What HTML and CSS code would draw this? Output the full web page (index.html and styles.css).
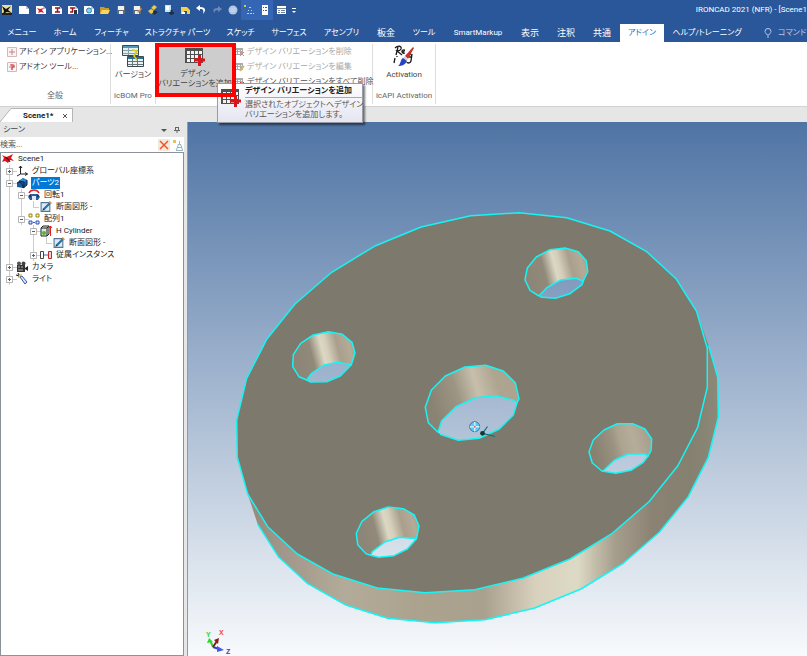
FILE: index.html
```html
<!DOCTYPE html>
<html lang="ja">
<head>
<meta charset="utf-8">
<title>IRONCAD 2021</title>
<link rel="stylesheet" href="styles.css">
</head>
<body>
<svg class="defs" aria-hidden="true">
  <symbol id="grid-plus" viewBox="0 0 20 18">
    <path d="M0 0h18v15H0z" fill="#505050"/>
    <path d="M2 3h3v3H2zM6 3h3v3H6zM10 3h3v3h-3zM14 3h3v3h-3zM2 7h3v3H2zM6 7h3v3H6zM10 7h3v3h-3zM14 7h3v3h-3zM2 11h3v3H2zM6 11h3v3H6zM10 11h3v3h-3z" fill="#f2f2f2"/>
    <path d="M9 12h11M14.500 7v11" stroke="#d9151b" stroke-width="3"/>
  </symbol>
  <symbol id="grid-mini" viewBox="0 0 10 10">
    <path d="M0 1h8v7H0z" fill="#aaa"/>
    <path d="M1 3h1v1H1zM3 3h2v1H3zM6 3h1v1H6zM1 5h1v2H1zM3 5h2v2H3z" fill="#fff"/>
  </symbol>
  <symbol id="addin" viewBox="0 0 10 10">
    <path d="M.5.5h9v9h-9z" fill="#fbf3f3" stroke="#dcb6b6"/>
    <path d="M2 5h3V2M5 8V5h3" fill="none" stroke="#b98888"/>
  </symbol>
  <symbol id="page" viewBox="0 0 10 10"><path d="M0 1h7l3 3v5H0z" fill="#fff"/><path d="M7 1v3h3z" fill="#b9c4d6"/></symbol>
  <symbol id="sketch" viewBox="0 0 11 11">
    <path d="M1 1.500h8v8H1z" fill="#d9ecf8" stroke="#5b7590"/>
    <path d="M3 8l6-6" stroke="#2f6f9f" stroke-width="2"/><path d="M8 1l2 2 1-1-2-2z" fill="#d79b3a"/><path d="M2 9l1-2 1 1z" fill="#222"/>
  </symbol>
  <symbol id="minus" viewBox="0 0 7 7"><path d="M.5.5h6v6h-6z" fill="#fff" stroke="#b5b5b5"/><path d="M2 3.500h3" stroke="#55607c"/></symbol>
  <symbol id="plus" viewBox="0 0 7 7"><path d="M.5.5h6v6h-6z" fill="#fff" stroke="#b5b5b5"/><path d="M2 3.500h3M3.500 2v3" stroke="#55607c"/></symbol>
</svg>

<header class="titlebar">
  <div class="quick">
    <button aria-label="IRONCAD"><svg viewBox="0 0 10 10"><path d="M0 0h10v10H0z" fill="#e9dfa0"/><path d="M0 1l4 3 5-3-3 4 4 3-5-1-4 2 1-3z" fill="#111"/><path d="M0 8h10v2H0z" fill="#222"/></svg></button>
    <button aria-label="新規"><svg><use href="#page"/></svg></button>
    <button aria-label="新規シーン"><svg viewBox="0 0 10 10"><use href="#page"/><path d="M1 3l3 1 4-1-2 2 2 3-3-1-3 1 1-2z" fill="#e01b22"/></svg></button>
    <button aria-label="新規図面"><svg viewBox="0 0 10 10"><use href="#page"/><path d="M3 3h5M5.500 3v4M3 7h5" stroke="#9c1020" stroke-width="1.500"/></svg></button>
    <button aria-label="図面"><svg viewBox="0 0 10 10"><use href="#page"/><path d="M2 3h5M4.500 3v4M2 7h3" stroke="#9c1020" stroke-width="1.500"/><path d="M6 5h3v4H6z" fill="#333"/></svg></button>
    <button aria-label="リンク"><svg viewBox="0 0 10 10"><use href="#page"/><circle cx="5" cy="5.500" r="2.500" fill="#8ed0ea" stroke="#2784ad"/></svg></button>
    <button aria-label="開く"><svg viewBox="0 0 10 10"><path d="M0 2h4l1 1h4v5H0z" fill="#c99a24"/><path d="M2 5h8L8 9H0z" fill="#f8d75c"/></svg></button>
    <button aria-label="保存"><svg viewBox="0 0 10 10"><path d="M1 1h8v8H1z" fill="#646a74"/><path d="M2 1h6v4H2zM3 6h4v3H3z" fill="#f1f1f1"/></svg></button>
    <button aria-label="名前を付けて保存"><svg viewBox="0 0 10 10"><path d="M1 1h8v8H1z" fill="#646a74"/><path d="M2 1h6v4H2zM3 6h4v3H3z" fill="#f1f1f1"/><path d="M5 7l4-4 1 1-4 4z" fill="#e5923b"/></svg></button>
    <button aria-label="カタログ"><svg viewBox="0 0 10 10"><path d="M3 3l3-3 3 2-3 3zM0 6l3-2 4 2-4 3z" fill="#ecc94b"/><path d="M6 5l4 2-4 3-1-3z" fill="#202a3c"/></svg></button>
    <button aria-label="部品"><svg viewBox="0 0 10 10"><path d="M1 0h6v7H1z" fill="#bcebf5"/><path d="M2 1h3v4H2z" fill="#fff"/><path d="M5 8h5M7.500 5v5" stroke="#222c44" stroke-width="2"/></svg></button>
    <button aria-label="取込"><svg viewBox="0 0 10 10"><path d="M1 2h6l3 3v4H7V6H4v3H1z" fill="#f4cf4a"/><path d="M2 7h3v2H2z" fill="#fff"/></svg></button>
    <button aria-label="元に戻す"><svg viewBox="0 0 10 10"><path d="M4 0L0 3l4 3V4c3 0 4 1 3 5 4-4 2-7-3-7z" fill="#fff"/></svg></button>
    <button aria-label="やり直し"><svg viewBox="0 0 10 10"><path d="M6 1l4 3-4 3V5C3 5 2 6 3 8 0 6 1 3 6 3z" fill="#6d8ab9"/></svg></button>
    <button aria-label="表示"><svg viewBox="0 0 10 10"><circle cx="5" cy="5" r="4.500" fill="#a9bfdf"/><path d="M1 4h8M1 6h8M4 1v8M6 1v8" stroke="#d7e3f4" stroke-width=".6"/></svg></button>
    <button aria-label="ツリー" class="on"><svg viewBox="0 0 10 10"><path d="M0 0h2v2H0z" fill="#e0c14a"/><path d="M5 2h2v1H5zM4 5h1v1H4zM7 5h1v1H7zM3 8h2v1H3zM6 8h2v1H6zM9 8h1v1H9z" fill="#b8d3f2"/></svg></button>
    <button aria-label="プロパティ" class="on"><svg viewBox="0 0 10 10"><path d="M2 0h6v10H2z" fill="#fff"/><path d="M3 2.500h1M5 2.500h2M3 5.500h1M5 5.500h2" stroke="#555"/></svg></button>
    <button aria-label="一覧"><svg viewBox="0 0 10 10"><path d="M1 1h9v8H1z" fill="#fff"/><path d="M1 3.500h9M2 5.500h2M5 5.500h4M2 7.500h2M5 7.500h4" stroke="#718096"/></svg></button>
    <button aria-label="その他" class="more"><svg viewBox="0 0 10 10"><path d="M3 3h4v1H3zM3 6h4L5 8z" fill="#fff"/></svg></button>
  </div>
  <div class="apptitle">IRONCAD 2021 (NFR) - [Scene1</div>
</header>

<nav class="tabs">
  <a href="#">メニュー</a><a href="#">ホーム</a><a href="#">フィーチャ</a><a href="#">ストラクチャ パーツ</a><a href="#">スケッチ</a><a href="#">サーフェス</a><a href="#">アセンブリ</a><a href="#" class="kanji">板金</a><a href="#">ツール</a><a href="#">SmartMarkup</a><a href="#" class="kanji">表示</a><a href="#" class="kanji">注釈</a><a href="#" class="kanji">共通</a><a href="#" class="active">アドイン</a><a href="#">ヘルプ/トレーニング</a>
  <a href="#" class="command"><svg viewBox="0 0 8 10"><path d="M3 7C3 6 1 5 1 3.500a3 3 0 0 1 6 0C7 5 5 6 5 7zM3 9h2" fill="none" stroke="#b9cae6"/></svg>コマンド</a>
</nav>

<section class="ribbon">
  <div class="group general">
    <div class="body list">
      <button><svg><use href="#addin"/></svg>アドイン アプリケーション...</button>
      <button><svg viewBox="0 0 10 10"><use href="#addin"/><path d="M3 3h4v2H5v3" fill="none" stroke="#d33"/></svg>アドオン ツール...</button>
    </div>
    <div class="caption">全般</div>
  </div>
  <div class="group bom">
    <div class="body">
      <button class="big"><svg viewBox="0 0 22 22"><path d="M.5.5h16v10H.5z" fill="#dff0f4" stroke="#3a4850"/><path d="M1 1h15v2H1z" fill="#4f98bd"/><path d="M1 5.500h15M1 8.500h15M6.500 3v7" stroke="#8ca0a8"/><path d="M5.500 11.500h16v10h-16z" fill="#e9f2f4" stroke="#3a4850"/><path d="M6 12h15v2H6z" fill="#286f9c"/><path d="M6 16.500h15M6 19.500h15M10.500 14v7M15.500 14v7" stroke="#66757c"/><path d="M10 5l5 1-3 5 3 4" fill="none" stroke="#d8cb17" stroke-width="1.500"/></svg><span>バージョン</span></button>
    </div>
    <div class="caption">icBOM Pro</div>
  </div>
  <div class="group variation">
    <div class="body">
      <button class="big pressed"><svg viewBox="0 0 20 18"><use href="#grid-plus"/></svg><span>デザイン<br>バリエーションを追加</span></button>
      <div class="list dim">
        <button><svg viewBox="0 0 10 10"><use href="#grid-mini"/><path d="M5 5l4 4M9 5l-4 4" stroke="#dc8585"/></svg>デザイン バリエーションを削除</button>
        <button><svg viewBox="0 0 10 10"><use href="#grid-mini"/><path d="M5 9l4-5" stroke="#d6b66a" stroke-width="2"/></svg>デザイン バリエーションを編集</button>
        <button class="dark"><svg viewBox="0 0 10 10"><use href="#grid-mini"/><path d="M5 5l4 4M9 5l-4 4" stroke="#c33"/></svg>デザイン バリエーションをすべて削除</button>
      </div>
    </div>
    <div class="tooltip" role="tooltip">
      <svg viewBox="0 0 20 18"><use href="#grid-plus"/></svg>
      <div><strong>デザイン バリエーションを追加</strong><p>選択されたオブジェクトへデザイン<br>バリエーションを追加します。</p></div>
    </div>
    <div class="highlight"></div>
  </div>
  <div class="group api">
    <div class="body">
      <button class="big"><svg viewBox="0 0 22 22"><path d="M2 3c3-3 7-2 6 1-1 2-4 2-4 2l5 4M5 2L3 10M9 7c3 0 3-3 1-2s-1 4 2 3M18 9c-3 0-3 4 0 3l1-3-1 7c-1 3-4 2-4 1M2 13l-1 5M4 11v1" fill="none" stroke="#1b1b1b" stroke-width="1.300"/><path d="M12 11l8-9 1 1-6 11z" fill="#c3352b"/><path d="M9 14l3-3 3 3-2 3z" fill="#d5d8e0"/><path d="M10 13l4 3c-2 4-5 5-9 5 3-2 2-6 5-8z" fill="#2743c6"/></svg><span>Activation</span></button>
    </div>
    <div class="caption">icAPI Activation</div>
  </div>
</section>

<div class="doctabs">
  <svg viewBox="0 0 13 14"><path d="M0 14L11 .5h2V14z" fill="#fff"/><path d="M0 14L11 .5h2" fill="none" stroke="#b5b5b5"/></svg>
  <div class="doctab"><b>Scene1*</b><button aria-label="閉じる"><svg viewBox="0 0 6 6"><path d="M1 1l4 4M5 1L1 5" stroke="#555"/></svg></button></div>
</div>

<main class="workspace">
  <aside class="scene">
    <div class="panelhead"><span>シーン</span>
      <svg viewBox="0 0 6 6"><path d="M0 2h6L3 5z" fill="#555"/></svg>
      <svg viewBox="0 0 6 6"><path d="M1.500 0v3.500h3V0M0 3.500h6M3 4v2M1 .5h4" fill="none" stroke="#666"/></svg>
    </div>
    <div class="search"><input type="text" placeholder="検索..." aria-label="検索">
      <button aria-label="クリア" class="clear"><svg viewBox="0 0 12 12"><path d="M2 2l8 8M10 2l-8 8" stroke="#f0532c" stroke-width="1.500"/></svg></button>
      <button aria-label="フィルタ"><svg viewBox="0 0 12 12"><path d="M1 1h3v3H1z" fill="#e7c24d"/><path d="M7.500 2v3M6 5.500h3M5.500 8.500h4M4 11.500h7M5.500 8l1-3M9.500 8l-1-3M4.500 11l1-3M10.500 11l-1-3" fill="none" stroke="#93b7c4"/></svg></button>
    </div>
    <ul class="tree">
      <li class="root"><svg class="ico" viewBox="0 0 12 12"><path d="M0 2l4 2 3-1 4-2-2 4 3 3-4-1-2 3-3-2-3 1 2-4z" fill="#d9141c"/><path d="M3 4l3 2 2 3" fill="none" stroke="#400" /></svg><span>Scene1</span></li>
      <li><svg class="tw"><use href="#plus"/></svg><svg class="ico" viewBox="0 0 12 12"><path d="M4.500 1v8h7M4.500 9L1 11M3 3l1.500-2L6 3M9 7.500L11.500 9 9 10.500" fill="none" stroke="#222"/></svg><span>グローバル座標系</span></li>
      <li><svg class="tw"><use href="#minus"/></svg><svg class="ico" viewBox="0 0 12 12"><path d="M3 4l4-3 4 2v5l-4 3-6-1V6z" fill="#175d9e"/><path d="M3 4l4-3 4 2-3 2z" fill="#2e86d0"/><path d="M3 4l5 1v6M1 6c3-2 6 0 6 5M11 3v5l-4 3" fill="none" stroke="#0a2344"/></svg><span class="sel">パーツ2</span></li>
      <li class="l1"><svg class="tw"><use href="#minus"/></svg><svg class="ico" viewBox="0 0 12 12"><path d="M2 5h8l2 3-2 3H2L0 8z" fill="#2d5c9b"/><path d="M1 4c2-4 8-4 10 0" fill="none" stroke="#e52020" stroke-width="1.500"/><path d="M4 7h4v4H4z" fill="#dbe8f5"/><path d="M1 7h2M9 7h2" stroke="#111"/></svg><span>回転1</span></li>
      <li class="l2 leaf mid"><svg class="ico"><use href="#sketch"/></svg><span>断面図形 -</span></li>
      <li class="l1"><svg class="tw"><use href="#minus"/></svg><svg class="ico" viewBox="0 0 12 12"><path d="M1 1h3v3H1zM8 1h3v3H8z" fill="#fff3a0" stroke="#97851c"/><path d="M1 8h3v3H1zM8 8h3v3H8z" fill="#d4e4ff" stroke="#2c50b5"/><path d="M5 9.500h2" stroke="#2c50b5"/></svg><span>配列1</span></li>
      <li class="l2"><svg class="tw"><use href="#minus"/></svg><svg class="ico" viewBox="0 0 12 12"><path d="M1 3l2-2h6v8l-2 2H1z" fill="#dfe8da" stroke="#222"/><path d="M1 3h6v8M7 3l2-2" fill="none" stroke="#222"/><circle cx="4" cy="8" r="2" fill="#52b52d"/><path d="M10.500 11V1M9 3l1.500-2L12 3" fill="none" stroke="#e02020"/></svg><span>H Cylinder</span></li>
      <li class="l3 leaf deep"><svg class="ico"><use href="#sketch"/></svg><span>断面図形 -</span></li>
      <li class="l2"><svg class="tw"><use href="#plus"/></svg><svg class="ico" viewBox="0 0 12 12"><path d="M.5 2.500h3v7h-3z" fill="#fff" stroke="#444"/><path d="M4 6h4" stroke="#2866bc"/><path d="M8.500 2.500h3v7h-3z" fill="#f8d5d5" stroke="#c02626"/></svg><span>従属インスタンス</span></li>
      <li><svg class="tw"><use href="#plus"/></svg><svg class="ico" viewBox="0 0 12 12"><path d="M1 4h8v7H1z" fill="#333"/><circle cx="3" cy="2.500" r="2" fill="#555"/><circle cx="7.500" cy="2.500" r="2" fill="#444"/><path d="M9 7l3-2v5L9 8z" fill="#222"/><path d="M2 6h2M5 6h2M2 9h5" stroke="#bbb"/></svg><span>カメラ</span></li>
      <li><svg class="tw"><use href="#plus"/></svg><svg class="ico" viewBox="0 0 12 12"><path d="M1 1h5L5 4 2 5z" fill="#f2cf75"/><path d="M4 4l2-1 5 6-2 2z" fill="#dce6f2" stroke="#345c96"/><path d="M0 2l3 1M2 0l1 2" stroke="#222"/></svg><span>ライト</span></li>
    </ul>
  </aside>

  <div class="viewport">
    <svg viewBox="188 122 619 534" preserveAspectRatio="xMinYMin meet" role="img" aria-label="3D モデル">
      <defs>
        <linearGradient id="side" gradientUnits="userSpaceOnUse" x1="250" y1="0" x2="718" y2="0">
          <stop offset="0" stop-color="#958b7c"/><stop offset=".07" stop-color="#a0968a"/><stop offset=".2" stop-color="#b3ab99"/><stop offset=".35" stop-color="#aca38f"/><stop offset=".5" stop-color="#a9a08d"/><stop offset=".61" stop-color="#d8d1bd"/><stop offset=".7" stop-color="#dcdac5"/><stop offset=".78" stop-color="#a69e8d"/><stop offset=".86" stop-color="#8b8273"/><stop offset=".94" stop-color="#85806f"/><stop offset="1" stop-color="#8c8979"/>
        </linearGradient>
        <linearGradient id="bore" x1="0" y1=".2" x2="1" y2="0">
          <stop offset="0" stop-color="#8d8678"/><stop offset=".24" stop-color="#918979"/><stop offset=".42" stop-color="#dcd8c4"/><stop offset=".5" stop-color="#d5cfbc"/><stop offset=".67" stop-color="#a99f8c"/><stop offset=".85" stop-color="#b3aa97"/><stop offset="1" stop-color="#a2988a"/>
        </linearGradient>
        <linearGradient id="bore-soft" x1="0" y1=".2" x2="1" y2="0">
          <stop offset="0" stop-color="#89816f"/><stop offset=".3" stop-color="#989080"/><stop offset=".45" stop-color="#aca390"/><stop offset=".65" stop-color="#b6ad99"/><stop offset="1" stop-color="#a2998a"/>
        </linearGradient>
        <linearGradient id="bore-mid" x1="0" y1=".2" x2="1" y2="0">
          <stop offset="0" stop-color="#8a8373"/><stop offset=".28" stop-color="#9d9584"/><stop offset=".5" stop-color="#c7bfac"/><stop offset=".72" stop-color="#aea590"/><stop offset="1" stop-color="#aca28e"/>
        </linearGradient>
      </defs>
      <path fill="url(#side)" d="M247.700 494L257.700 524.300 278.300 556.700 307.700 583.700 345 604.700 387.700 618.300 435 622.700 485 619.700 534 608.300 581 589 623.300 563.300 659.300 532.300 688.300 496.700 708.300 457.300 718.300 417.300 717.700 377.300 708.700 345.700 696.700 311.700 707.300 348.300 707.300 387.300 697.700 427.300 677.700 466 649 501.700 612.300 533.300 570 559 523.300 578 475 589.700 425 592.700 377.300 588 333.700 574.300 297.300 554 267.700 526.700z"/>
      <path fill="#7e796d" fill-rule="evenodd" d="M236.700 420L246.700 378.300 266.700 339.300 295 304 331.700 272.300 374.300 246.300 421 227 470.700 215.700 519.300 212.700 566.700 217.700 610 231 646.700 251.700 676 278.700 696.700 311.700 707.300 348.300 707.300 387.300 697.700 427.300 677.700 466 649 501.700 612.300 533.300 570 559 523.300 578 475 589.700 425 592.700 377.300 588 333.700 574.300 297.300 554 267.700 526.700 247.700 494 237.300 457.300z
        M328.300 331.700L342.300 334.300 352 342.300 355 353.300 351.300 364.700 340.300 376 326.700 381.700 310.700 382 299 376.700 292.700 366.700 293.300 354.700 300.700 343.300 313.300 335z
        M565 248L578.300 251.700 586.300 260.700 587.700 271.700 582 284.700 570 293.700 555.300 298.300 540 297 530 290.300 525 280 527.300 268 536.300 257 550 249.700z
        M388.300 507L403.300 508.700 414.300 515 419 526 416.700 538.300 407.300 549 394 555.700 378.700 557.300 366 553.700 357.700 544.700 356.300 533.300 362 521.300 374 511.700z
        M617.300 423.700L632.700 423.700 645 429 651.700 439 651 450.700 643.300 462.300 631 470.300 615.700 473.300 602 471 592.300 463 589 452 593.300 440 604 430z
        M485.700 365.300L503.300 371 515.300 382.700 519 399 513.300 415 499.300 429 479.300 438.300 458.300 440.300 440 434.300 428.300 422.700 425.300 407.300 431.300 390.300 445.300 376 465 367z"/>
      <g stroke="#16f4f4" stroke-width="1.500" stroke-linejoin="round">
        <path fill="url(#bore)" d="M306.700 380L299 376.700 292.700 366.700 293.300 354.700 300.700 343.300 313.300 335 328.300 331.700 342.300 334.300 352 342.300 355 353.300 351.300 364.700 338.300 362.300 324 365 311.700 373.300z"/>
        <path fill="url(#bore)" d="M539 296L530 290.300 525 280 527.300 268 536.300 257 550 249.700 565 248 578.300 251.700 586.300 260.700 587.700 271.700 583.300 281 576 278.300 560.700 280 547.300 287.300z"/>
        <path fill="url(#bore)" d="M370.700 555.300L366 553.700 357.700 544.700 356.300 533.300 362 521.300 374 511.700 388.300 507 403.300 508.700 414.300 515 419 526 416.500 538.700 399.300 537.300 385 542 372.300 551.700z"/>
        <path fill="url(#bore-soft)" d="M603.300 470.700L602 471 592.300 463 589 452 593.300 440 604 430 617.300 423.700 632.700 423.700 645 429 651.700 439 651 450.700 648.300 455.700 644 453.700 628 454 614.300 460.300z"/>
        <path fill="url(#bore-mid)" d="M438 432.300L428.300 422.700 425.300 407.300 431.300 390.300 445.300 376 465 367 485.700 365.300 503.300 371 515.300 382.700 519 399 517 402.700 513.300 400.300 496 395.700 475.700 397.700 456 406.700 441.700 420.700z"/>
        <path fill="none" d="M351.300 364.700L340.300 376 326.700 381.700 310.700 382 306.700 380M583.300 281L582 284.700 570 293.700 555.300 298.300 540 297M416.500 538.700L407.300 549 394 555.700 378.700 557.300 370.700 555.300M648.300 455.700L643.300 462.300 631 470.300 615.700 473.300 602 471M517 402.700L513.300 415 499.300 429 479.300 438.300 458.300 440.300 440 434.300"/>
        <path fill="none" d="M236.700 420L246.700 378.300 266.700 339.300 295 304 331.700 272.300 374.300 246.300 421 227 470.700 215.700 519.300 212.700 566.700 217.700 610 231 646.700 251.700 676 278.700 696.700 311.700 707.300 348.300 707.300 387.300 697.700 427.300 677.700 466 649 501.700 612.300 533.300 570 559 523.300 578 475 589.700 425 592.700 377.300 588 333.700 574.300 297.300 554 267.700 526.700 247.700 494 237.300 457.300z"/>
        <path fill="none" d="M257.700 524.300L278.300 556.700 307.700 583.700 345 604.700 387.700 618.300 435 622.700 485 619.700 534 608.300 581 589 623.300 563.300 659.300 532.300 688.300 496.700 708.300 457.300 718.300 417.300 717.700 377.300 708.700 345.700"/>
      </g>
      <g>
        <circle cx="474.700" cy="426.700" r="5" fill="#55cdf2" stroke="#5568a8"/>
        <path d="M474.700 422v9.500M470 426.700h9.500" stroke="#c9f3ff" stroke-width="1.500"/><circle cx="474.700" cy="426.700" r="1" fill="#d66"/>
        <path d="M495 436.500L482.500 433.300 487.500 426.500" fill="none" stroke="#0d7077" stroke-width="1.200"/><circle cx="482.500" cy="433.300" r="2.400" fill="#0b3b35"/>
      </g>
      <g>
        <path d="M213 647l-3-7" stroke="#35d335" stroke-width="2"/><path d="M207 643l2-5 4 4z" fill="#35d335"/>
        <path d="M213 647l4-6" stroke="#8b1a1a" stroke-width="2"/><path d="M214 640l5-2-1 6z" fill="#8b1a1a"/>
        <path d="M213 647l6 2" stroke="#2d3fd0" stroke-width="2"/><path d="M217 646l7 4-7 2z" fill="#4a5ae0"/>
        <g class="axis"><text x="206" y="637" fill="#35d335">Y</text><text x="219" y="635" fill="#f04848">X</text><text x="226" y="654" fill="#2d3fd0">Z</text></g>
      </g>
    </svg>
  </div>
</main>
</body>
</html>
```
FILE: styles.css
```css
* { box-sizing: border-box; }
html, body { height: 100%; margin: 0; }
body {
  display: flex;
  flex-direction: column;
  overflow: hidden;
  background: #e6e6e6;
  color: #444;
  font: 8px/12px Roboto, "Noto Sans CJK JP", sans-serif;
  font-feature-settings: "palt";
}
button, input { font: inherit; font-feature-settings: inherit; color: inherit; border: 0; padding: 0; margin: 0; background: none; }
svg { display: block; flex: none; }
.defs { position: absolute; width: 0; height: 0; }

.titlebar { display: flex; height: 20px; background: #2a579a; color: #fff; align-items: center; justify-content: space-between; }
.quick { display: flex; }
.quick button { width: 16px; height: 20px; display: grid; place-items: center; }
.quick button:first-child { width: 14px; }
.quick button:nth-child(2) { width: 19px; }
.quick svg { width: 10px; height: 10px; }
.quick .on { background: #3566b3; }
.quick .more { width: 10px; }
.apptitle { white-space: nowrap; }

.tabs {
  display: grid;
  grid-template-columns: 44px 42px 51px 81px 45px 52px 53px 36px 40px 68px 36px 36px 36px 44px 86px 1fr;
  height: 22px;
  background: #2a579a;
  padding-top: 4px;
}
.tabs a { color: #fff; text-decoration: none; display: flex; justify-content: center; align-items: center; white-space: nowrap; }
.tabs .kanji { font-size: 9px; }
.tabs .active { background: #fff; color: #2a6fc0; }
.tabs .command { justify-content: flex-start; gap: 6px; color: #b9cae6; padding-left: 14px; }
.command svg { width: 8px; height: 10px; }

.ribbon { display: flex; height: 65px; background: #fff; border-bottom: 1px solid #d2d2d2; }
.group { display: flex; flex-direction: column; border-right: 1px solid #dcdcdc; margin: 2px 0; position: relative; }
.body { display: flex; flex: 1; }
.caption { height: 14px; text-align: center; color: #666; white-space: nowrap; }
.general { width: 111px; }
.bom { width: 45px; }
.variation { width: 217px; }
.api { width: 63px; }
.list { display: flex; flex-direction: column; }
.list button { display: flex; align-items: center; gap: 2px; height: 15px; white-space: nowrap; }
.list svg { width: 10px; height: 10px; }
.general .list { padding-left: 7px; }
.dim { color: #a8a8a8; }
.dim .dark { color: #555; }
.big { display: flex; flex-direction: column; align-items: center; width: 100%; padding-top: 1px; gap: 3px; line-height: 10px; white-space: nowrap; }
.big svg { width: 22px; height: 22px; }
.variation .pressed { flex: none; width: 78px; height: 51px; background: #cdcdcd; padding-top: 4px; margin-right: 1px; }
.pressed svg { width: 20px; height: 18px; }
.highlight { position: absolute; left: -1px; top: -1px; width: 81px; height: 54px; border: 4px solid #f00; }
.tooltip {
  position: absolute; left: 61px; top: 39px; width: 146px; height: 40px;
  display: flex; gap: 4px; padding: 2px 3px;
  background: linear-gradient(#fff, #e4e5f0);
  border: 1px solid #9a9aa8; box-shadow: 2px 2px 2px #0008;
  line-height: 10px; white-space: nowrap; color: #555;
}
.tooltip svg { width: 20px; height: 18px; margin-top: 3px; }
.tooltip strong { display: block; color: #222; border-bottom: 1px solid #aaa; padding-bottom: 1px; }
.tooltip p { margin: 2px 0 0; }

.doctabs { display: flex; height: 15px; padding-top: 1px; }
.doctabs svg { width: 13px; height: 14px; }
.doctab { display: flex; align-items: center; justify-content: space-between; width: 60px; padding: 0 4px 0 10px; background: #fff; border-top: 1px solid #b5b5b5; border-right: 1px solid #b5b5b5; color: #222; }
.doctab svg { width: 6px; height: 6px; }

.workspace { display: flex; flex: 1; min-height: 0; gap: 3px; }
.scene { width: 184px; display: flex; flex-direction: column; }
.panelhead { display: flex; align-items: center; gap: 7px; height: 15px; padding: 0 4px 0 3px; }
.panelhead span { flex: 1; }
.panelhead svg { width: 6px; height: 6px; }
.search { display: flex; height: 15px; background: #fff; align-items: center; gap: 2px; }
.search input { flex: 1; min-width: 0; outline: 0; }
.search input::placeholder { color: #555; opacity: 1; }
.search svg { width: 12px; height: 12px; }
.search .clear { background: #f1e9dc; }
.tree {
  --guide: linear-gradient(#ccc, #ccc);
  list-style: none; margin: 0; padding: 0 0 0 5px; flex: 1; background: #fff; border: 1px solid #8d9199; color: #222;
}
.tree li { display: flex; align-items: center; height: 12px; gap: 3px; white-space: nowrap; background: var(--guide) 3px 0 / 1px 100% no-repeat, var(--guide) 3px 6px / 8px 1px no-repeat; }
.tree .root { margin-left: -4px; background: none; }
.tree .tw { width: 7px; height: 7px; }
.tree .ico { width: 12px; height: 12px; }
.tree span { padding: 0 1px; }
.tree .sel { background: #0078d7; color: #fff; }
.tree .l1 { padding-left: 12px; background: var(--guide) 3px 0 / 1px 100% no-repeat, var(--guide) 15px 0 / 1px 100% no-repeat, var(--guide) 15px 6px / 8px 1px no-repeat; }
.tree .l2 { padding-left: 24px; background: var(--guide) 3px 0 / 1px 100% no-repeat, var(--guide) 27px 0 / 1px 100% no-repeat, var(--guide) 27px 6px / 8px 1px no-repeat; }
.tree .mid { padding-left: 34px; background: var(--guide) 3px 0 / 1px 100% no-repeat, var(--guide) 15px 0 / 1px 100% no-repeat, var(--guide) 27px 0 / 1px 6px no-repeat, var(--guide) 27px 6px / 6px 1px no-repeat; }
.tree .deep { padding-left: 47px; background: var(--guide) 3px 0 / 1px 100% no-repeat, var(--guide) 27px 0 / 1px 100% no-repeat, var(--guide) 40px 0 / 1px 6px no-repeat, var(--guide) 40px 6px / 6px 1px no-repeat; }

.viewport { flex: 1; min-width: 0; border-left: 1px solid #8d9bb0; background: linear-gradient(#4f74a4, #f8fafc); }
.viewport svg { width: 100%; height: 100%; }
.axis { font: bold 7px "Liberation Sans", sans-serif; }
```
